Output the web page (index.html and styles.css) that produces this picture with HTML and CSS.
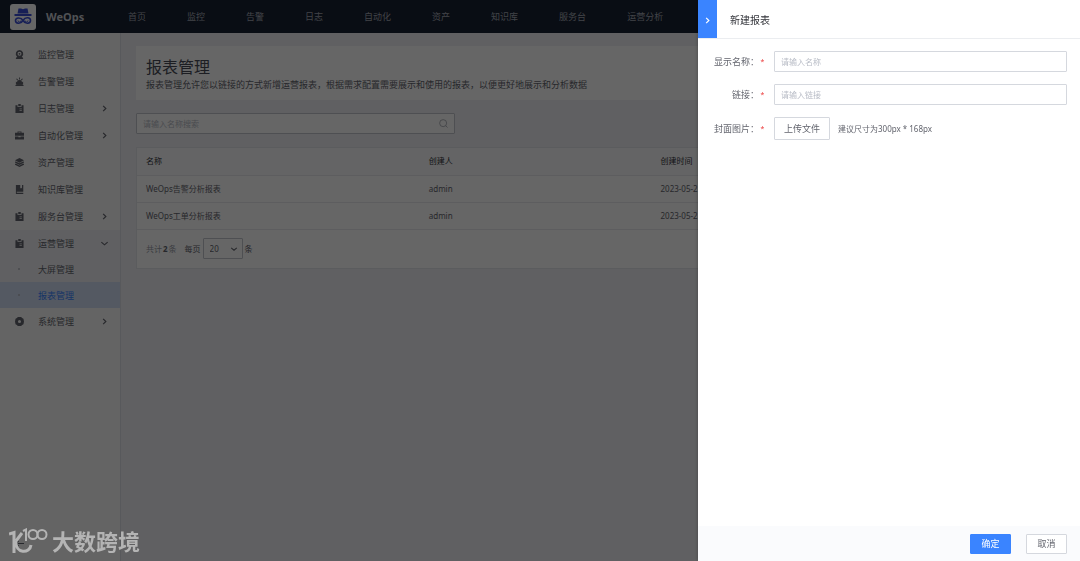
FILE: index.html
```
<!DOCTYPE html>
<html lang="zh-CN">
<head>
  <meta charset="UTF-8">
  <title>WeOps - 报表管理</title>
  <link rel="stylesheet" href="styles.css">
</head>
<body>

<svg class="sprite" aria-hidden="true">
  <symbol id="i-right" viewBox="0 0 10 10"><path d="M3.500 2l3 3-3 3" fill="none" stroke="currentColor" stroke-width="1.300"/></symbol>
  <symbol id="i-down" viewBox="0 0 10 10"><path d="M1.500 3.500l3.500 3 3.500-3" fill="none" stroke="currentColor" stroke-width="1.300"/></symbol>
  <symbol id="i-monitor" viewBox="0 0 10 10"><path fill-rule="evenodd" d="M5 0a4.300 4.300 0 0 1 2.600 7.600L9 9v1H1V9l1.400-1.400A4.300 4.300 0 0 1 5 0zM5 2a2.200 2.200 0 1 0 0 4.400A2.200 2.200 0 0 0 5 2z"/><circle cx="5" cy="4.200" r="1"/></symbol>
  <symbol id="i-alarm" viewBox="0 0 10 10"><path d="M.5 9h9v1h-9zM1 8.500V5l1.500 1A2.500 2.500 0 0 1 5 3.500 2.500 2.500 0 0 1 7.500 6L9 5v3.500zM4.500.500h1v2.200h-1zM1.300 2.300l.8-.7 1.300 1.500-.8.700zM8.700 2.300l-.8-.7-1.300 1.500.8.700z"/><path d="M2.300 8.500V6a2.700 2.700 0 0 1 5.400 0v2.500z"/></symbol>
  <symbol id="i-log" viewBox="0 0 10 10"><path fill-rule="evenodd" d="M.5 1.500H2.800v1.700h4.400V1.500h2.300V10h-9zM5 5v.8h2.600V5zM5 6.800v.8h2.600v-.8z"/><path d="M3.600 0h2.800v2.400H3.600z"/></symbol>
  <symbol id="i-auto" viewBox="0 0 10 10"><path fill-rule="evenodd" d="M2.800 2V.5h4.400V2H10v3.200H0V2zM3.800 1.400V2h2.400v-.6z"/><path d="M0 6h3.800v1h2.400V6H10v3.500H0z"/></symbol>
  <symbol id="i-asset" viewBox="0 0 10 10"><path d="M5 0l5 2.600-5 2.600-5-2.600zM0 4.300l1-.5 4 2.100 4-2.100 1 .5v.8L5 7.700 0 5.100zM0 6.700l1-.5 4 2.100 4-2.100 1 .5v.7L5 10 0 7.400z"/></symbol>
  <symbol id="i-book" viewBox="0 0 10 10"><path fill-rule="evenodd" d="M1 0h4.800v4l1-1 1 1V0H9.200v7.500H2v1h7.200V10H1z"/></symbol>
  <symbol id="i-gear" viewBox="0 0 10 10"><path fill-rule="evenodd" d="M3.200 0h3.600l1.100 1.100 1.500.9.600 3-.6 3-1.500.9L6.800 10H3.200L2.100 8.900.6 8 0 5l.6-3 1.500-.9zM5 3.300a1.700 1.700 0 1 0 0 3.400 1.700 1.700 0 0 0 0-3.400z"/></symbol>
</svg>

<header class="topbar">
  <svg class="logo" viewBox="0 0 26 26">
    <rect width="26" height="26" rx="3" fill="#fff"/>
    <path d="M7.500 9.500l1-5H11l2 .8 2-.8h2.500l1 5z" fill="#3a4fd8"/>
    <path d="M4.500 10h17v2h-17z" fill="#3a4fd8"/>
    <path d="M13 16.500c-2-3.600-7.500-3-7.500 0s5 4.200 7.500 0 7.500-3 7.500 0-5 4.200-7.500 0z" fill="none" stroke="#3a4fd8" stroke-width="1.600"/>
    <path d="M8 16.500a1.500 1.500 0 1 0 3 0M15 16.500a1.500 1.500 0 1 0 3 0" fill="none" stroke="#3a4fd8"/>
  </svg>
  <strong class="brand">WeOps</strong>
  <nav class="nav">
    <a href="#">首页</a>
    <a href="#">监控</a>
    <a href="#">告警</a>
    <a href="#">日志</a>
    <a href="#">自动化</a>
    <a href="#">资产</a>
    <a href="#">知识库</a>
    <a href="#">服务台</a>
    <a href="#">运营分析</a>
  </nav>
</header>

<div class="layout">
  <aside class="sidebar">
    <a class="item" href="#"><svg><use href="#i-monitor"/></svg><span>监控管理</span></a>
    <a class="item" href="#"><svg><use href="#i-alarm"/></svg><span>告警管理</span></a>
    <a class="item" href="#"><svg><use href="#i-log"/></svg><span>日志管理</span><svg class="arrow"><use href="#i-right"/></svg></a>
    <a class="item" href="#"><svg><use href="#i-auto"/></svg><span>自动化管理</span><svg class="arrow"><use href="#i-right"/></svg></a>
    <a class="item" href="#"><svg><use href="#i-asset"/></svg><span>资产管理</span></a>
    <a class="item" href="#"><svg><use href="#i-book"/></svg><span>知识库管理</span></a>
    <a class="item" href="#"><svg><use href="#i-log"/></svg><span>服务台管理</span><svg class="arrow"><use href="#i-right"/></svg></a>
    <div class="group">
      <a class="item" href="#"><svg><use href="#i-log"/></svg><span>运营管理</span><svg class="arrow"><use href="#i-down"/></svg></a>
      <a class="item sub" href="#"><i class="dot"></i><span>大屏管理</span></a>
      <a class="item sub active" href="#"><i class="dot"></i><span>报表管理</span></a>
    </div>
    <a class="item" href="#"><svg><use href="#i-gear"/></svg><span>系统管理</span><svg class="arrow"><use href="#i-right"/></svg></a>
    <button class="collapse" aria-label="收起菜单"><svg viewBox="0 0 10 10"><path d="M10 5H1M4 2L1 5l3 3" fill="none" stroke="currentColor" stroke-width="1.300"/></svg></button>
  </aside>

  <main class="content">
    <section class="intro">
      <h1>报表管理</h1>
      <p>报表管理允许您以链接的方式新增运营报表，根据需求配置需要展示和使用的报表，以便更好地展示和分析数据</p>
    </section>

    <div class="search">
      <input type="text" placeholder="请输入名称搜索" aria-label="请输入名称搜索">
      <svg viewBox="0 0 10 10"><path d="M7.500 7.500L9.500 9.500M8.500 4.600a3.900 3.900 0 1 1-7.800 0 3.900 3.900 0 0 1 7.800 0z" fill="none" stroke="currentColor" stroke-width=".8"/></svg>
    </div>

    <section class="panel">
      <table class="reports">
        <thead>
          <tr><th class="col-name">名称</th><th class="col-user">创建人</th><th>创建时间</th></tr>
        </thead>
        <tbody>
          <tr><td>WeOps告警分析报表</td><td>admin</td><td>2023-05-2</td></tr>
          <tr><td>WeOps工单分析报表</td><td>admin</td><td>2023-05-2</td></tr>
        </tbody>
      </table>
      <div class="pager">
        <span class="total">共计<b>2</b>条</span>
        <label for="size">每页</label>
        <span class="size">
          <select id="size"><option>20</option></select>
          <svg><use href="#i-down"/></svg>
        </span>
        <span>条</span>
      </div>
    </section>
  </main>
</div>

<div class="mask"></div>

<form class="drawer">
  <div class="drawer-head">
    <button type="button" class="close" aria-label="关闭"><svg><use href="#i-right"/></svg></button>
    <h2>新建报表</h2>
  </div>
  <div class="drawer-body">
    <div class="field">
      <label for="name">显示名称：</label><em>*</em>
      <input type="text" id="name" placeholder="请输入名称">
    </div>
    <div class="field">
      <label for="link">链接：</label><em>*</em>
      <input type="text" id="link" placeholder="请输入链接">
    </div>
    <div class="field">
      <label for="upload">封面图片：</label><em>*</em>
      <button type="button" class="upload" id="upload">上传文件</button>
      <span class="tip">建议尺寸为300px * 168px</span>
    </div>
  </div>
  <div class="drawer-foot">
    <button type="button" class="btn primary">确定</button>
    <button type="button" class="btn">取消</button>
  </div>
</form>

<div class="watermark">
  <svg viewBox="0 0 40 26">
    <path d="M0 6l5-1.500V25M13 5L7 13M7 13c-1 13 14 13 15 4" fill="none" stroke="currentColor" stroke-width="3"/>
    <path d="M14 3l3-1.500V13" fill="none" stroke="currentColor" stroke-width="2"/>
    <circle cx="24" cy="6.500" r="4.500" fill="none" stroke="currentColor" stroke-width="2"/>
    <circle cx="33" cy="6.500" r="4.500" fill="none" stroke="currentColor" stroke-width="2"/>
  </svg>
  <span>大数跨境</span>
</div>

</body>
</html>
```
FILE: styles.css
```
* {
  box-sizing: border-box;
}

body {
  margin: 0;
  min-height: 100vh;
  display: flex;
  flex-direction: column;
  font-family: "Noto Sans", "Noto Sans CJK SC", sans-serif;
  font-size: 9px;
  color: #63656e;
  background: #f0f1f5;
  overflow: hidden;
}

a {
  color: inherit;
  text-decoration: none;
}

button, input, select {
  font: inherit;
  color: inherit;
}

svg {
  display: block;
  flex: none;
  width: 9px;
  height: 9px;
  fill: currentColor;
}

.sprite {
  position: absolute;
  width: 0;
  height: 0;
}

/* top bar */
.topbar {
  display: flex;
  align-items: center;
  height: 33px;
  padding-left: 10px;
  background: #182132;
  color: #a3a8b4;
}

.topbar .logo {
  width: 26px;
  height: 26px;
}

.brand {
  width: 82px;
  margin-left: 10px;
  font-size: 11px;
  color: #c8ccd4;
}

.nav {
  display: flex;
  gap: 41px;
}

/* sidebar */
.layout {
  flex: 1;
  display: flex;
}

.sidebar {
  flex: none;
  display: flex;
  flex-direction: column;
  width: 121px;
  padding-top: 8px;
  background: #fafafa;
  border-right: 1px solid #dcdee5;
}

.item {
  display: flex;
  align-items: center;
  height: 27px;
  padding: 0 11px 0 15px;
}

.item span {
  margin-left: 14px;
}

.item .arrow {
  margin-left: auto;
}

.group {
  background: #f0f1f5;
}

.group .item {
  height: 26px;
}

.group .active {
  background: #d3def5;
  color: #3a84ff;
}

.dot {
  width: 2px;
  height: 2px;
  margin: 0 4px 0 3px;
  border-radius: 50%;
  background: #b4b7c0;
}

.collapse {
  margin: auto 0 13px 15px;
  padding: 0;
  width: 10px;
  border: 0;
  background: none;
}

/* content */
.content {
  flex: 1;
  padding: 13px 15px;
}

.intro {
  padding: 11px 10px 8px;
  background: #fff;
}

.intro h1 {
  margin: 0;
  font-size: 16px;
  line-height: 21px;
  font-weight: 400;
  color: #4a4d58;
}

.intro p {
  margin: 0;
  line-height: 14px;
}

.search {
  display: flex;
  align-items: center;
  width: 319px;
  height: 21px;
  margin: 13px 0;
  padding: 0 6px;
  background: #fff;
  border: 1px solid #c4c6cc;
  border-radius: 1px;
  color: #979ba5;
}

.search input {
  flex: 1;
  padding: 0;
  border: 0;
  outline: 0;
  background: none;
  font-size: 8px;
}

::placeholder {
  color: #b8bcc6;
}

.panel {
  background: #fff;
  border: 1px solid #e4e6ec;
  font-size: 8px;
}

.reports {
  width: 100%;
  border-collapse: collapse;
  table-layout: fixed;
}

.reports th, .reports td {
  height: 27px;
  padding: 0 9px 1px;
  border-bottom: 1px solid #e8e9ee;
  text-align: left;
}

.reports th {
  background: #fafbfd;
  font-weight: 400;
  color: #313238;
}

.col-name {
  width: 30.5%;
}

.col-user {
  width: 25%;
}

.pager {
  display: flex;
  align-items: center;
  height: 38px;
  padding-left: 9px;
}

.total {
  margin-right: 8px;
  color: #979ba5;
}

.total b {
  margin: 0 1px;
  color: #63656e;
}

.size {
  position: relative;
  margin: 0 2px;
}

.size select {
  appearance: none;
  width: 40px;
  height: 21px;
  padding: 0 6px;
  border: 1px solid #c4c6cc;
  border-radius: 1px;
  background: #fff;
}

.size svg {
  position: absolute;
  top: 7px;
  right: 5px;
  width: 8px;
  height: 8px;
  pointer-events: none;
}

/* drawer */
.mask {
  position: fixed;
  inset: 0;
  background: rgba(0, 0, 0, 0.6);
}

.drawer {
  position: fixed;
  top: 0;
  right: 0;
  bottom: 0;
  display: flex;
  flex-direction: column;
  width: 382px;
  background: #fff;
  box-shadow: 0 0 4px rgba(0, 0, 0, 0.3);
}

.drawer-head {
  display: flex;
  align-items: center;
  height: 39px;
  border-bottom: 1px solid #ebedf0;
}

.close {
  display: flex;
  align-items: center;
  justify-content: center;
  width: 19px;
  height: 38px;
  padding: 2px 0 0;
  border: 0;
  background: #3a84ff;
  color: #fff;
}

.drawer-head h2 {
  margin: 0 0 0 13px;
  font-size: 10px;
  font-weight: 400;
  color: #313238;
}

.drawer-body {
  flex: 1;
  display: flex;
  flex-direction: column;
  gap: 12px;
  padding: 12px 13px;
}

.field {
  display: flex;
  align-items: center;
}

.field label {
  width: 48px;
  text-align: right;
  white-space: nowrap;
}

.field em {
  width: 15px;
  padding-right: 8px;
  text-align: center;
  font-style: normal;
  font-size: 7px;
  color: #ea3636;
}

.field input {
  flex: 1;
  height: 21px;
  padding: 0 6px;
  border: 1px solid #d5d8de;
  border-radius: 1px;
  font-size: 8px;
}

.upload, .btn {
  padding: 0;
  border: 1px solid #d5d8de;
  border-radius: 1px;
  background: #fff;
}

.upload {
  width: 56px;
  height: 23px;
}

.tip {
  margin-left: 8px;
  font-size: 8px;
}

.drawer-foot {
  display: flex;
  align-items: center;
  justify-content: flex-end;
  gap: 15px;
  height: 35px;
  padding-right: 13px;
  background: #fafbfd;
}

.btn {
  width: 41px;
  height: 20px;
}

.btn.primary {
  border-color: #3a84ff;
  background: #3a84ff;
  color: #fff;
}

.watermark {
  position: fixed;
  left: 9px;
  bottom: 6px;
  display: flex;
  align-items: center;
  gap: 3px;
  color: #b4b4b4;
  font-size: 22px;
  line-height: 28px;
  font-weight: 700;
}

.watermark svg {
  width: 40px;
  height: 26px;
}
```
